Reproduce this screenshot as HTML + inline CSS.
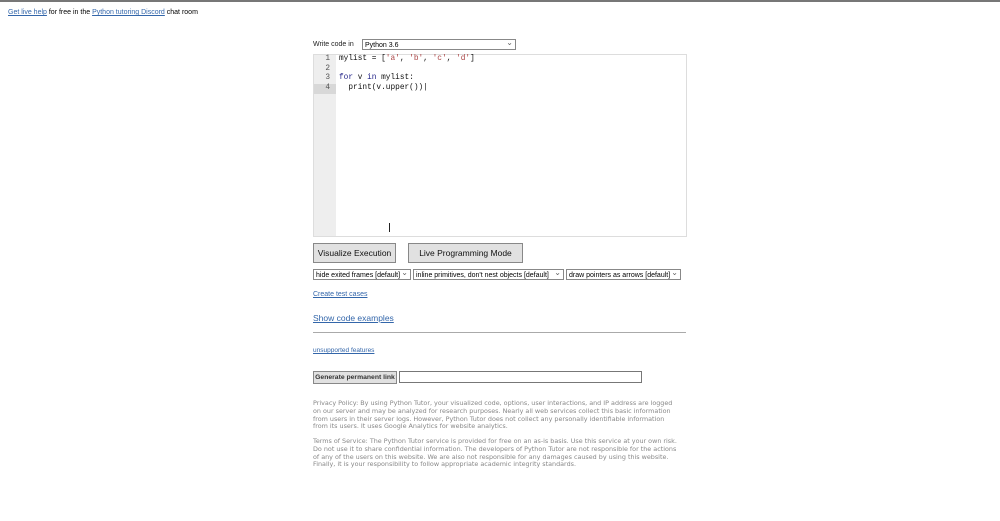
<!DOCTYPE html>
<html><head><style>
body{margin:0;width:1000px;height:521px;background:#fff;font-family:"Liberation Sans",sans-serif;position:relative;overflow:hidden;border-top:2px solid #777;box-sizing:border-box}
.a{position:absolute}
a{color:#3366aa;text-decoration:underline}
.code{font-family:"Liberation Mono",monospace;font-size:7.8px;line-height:9.7px;color:#111}
.sel{position:absolute;height:11px;border:1px solid #888;font-size:7px;line-height:11px;padding-left:2px;box-sizing:border-box;background:#fff}
.sel:after{content:"⌄";position:absolute;right:2px;top:-3px;font-size:8px;color:#666}
.btn{position:absolute;background:#e1e1e1;border:1px solid #888;box-sizing:border-box;text-align:center;color:#111}
.p{font-family:"DejaVu Sans",sans-serif;font-size:6.4px;line-height:7.8px;color:#888;width:368px}
</style></head><body>
<div class="a" style="left:8px;top:7px;font-size:7px"><a>Get live help</a> for free in the <a>Python tutoring Discord</a> chat room</div>
<div class="a" style="left:313px;top:39px;font-size:7px;color:#222">Write code in</div>
<div class="sel" style="left:362px;top:37px;width:154px">Python 3.6</div>
<div class="a" style="left:313px;top:52px;width:374px;height:183px;border:1px solid #ddd;box-sizing:border-box"></div>
<div class="a" style="left:314px;top:53px;width:22px;height:181px;background:#eee"></div>
<div class="a" style="left:314px;top:82px;width:22px;height:10px;background:#d8d8d8"></div>
<div class="a code" style="left:314px;top:53px;width:16px;text-align:right;color:#555">1<br>2<br>3<br>4</div>
<div class="a code" style="left:339px;top:53px">mylist = [<span style="color:#a44">'a'</span>, <span style="color:#a44">'b'</span>, <span style="color:#a44">'c'</span>, <span style="color:#a44">'d'</span>]<br><br><span style="color:#228">for</span> v <span style="color:#228">in</span> mylist:<br>&nbsp;&nbsp;print(v.upper())|</div>
<div class="a" style="left:389px;top:221px;width:1px;height:9px;background:#222"></div>
<div class="btn" style="left:313px;top:241px;width:83px;height:20px;font-size:8.5px;line-height:18px">Visualize Execution</div>
<div class="btn" style="left:408px;top:241px;width:115px;height:20px;font-size:8.5px;line-height:18px">Live Programming Mode</div>
<div class="sel" style="left:313px;top:267px;width:98px">hide exited frames [default]</div>
<div class="sel" style="left:413px;top:267px;width:151px">inline primitives, don't nest objects [default]</div>
<div class="sel" style="left:566px;top:267px;width:115px">draw pointers as arrows [default]</div>
<div class="a" style="left:313px;top:289px;font-size:7px"><a>Create test cases</a></div>
<div class="a" style="left:313px;top:311px;font-size:8.5px"><a>Show code examples</a></div>
<div class="a" style="left:313px;top:330px;width:373px;height:1px;background:#aaa"></div>
<div class="a" style="left:313px;top:345px;font-size:6.5px"><a>unsupported features</a></div>
<div class="btn" style="left:313px;top:369px;width:84px;height:13px;font-size:6.8px;line-height:11px;font-weight:bold;color:#333">Generate permanent link</div>
<div class="a" style="left:399px;top:369px;width:243px;height:12px;border:1px solid #777;box-sizing:border-box"></div>
<div class="a p" style="left:313px;top:398px">Privacy Policy: By using Python Tutor, your visualized code, options, user interactions, and IP address are logged on our server and may be analyzed for research purposes. Nearly all web services collect this basic information from users in their server logs. However, Python Tutor does not collect any personally identifiable information from its users. It uses Google Analytics for website analytics.</div>
<div class="a p" style="left:313px;top:436px">Terms of Service: The Python Tutor service is provided for free on an as-is basis. Use this service at your own risk. Do not use it to share confidential information. The developers of Python Tutor are not responsible for the actions of any of the users on this website. We are also not responsible for any damages caused by using this website. Finally, it is your responsibility to follow appropriate academic integrity standards.</div>
</body></html>
